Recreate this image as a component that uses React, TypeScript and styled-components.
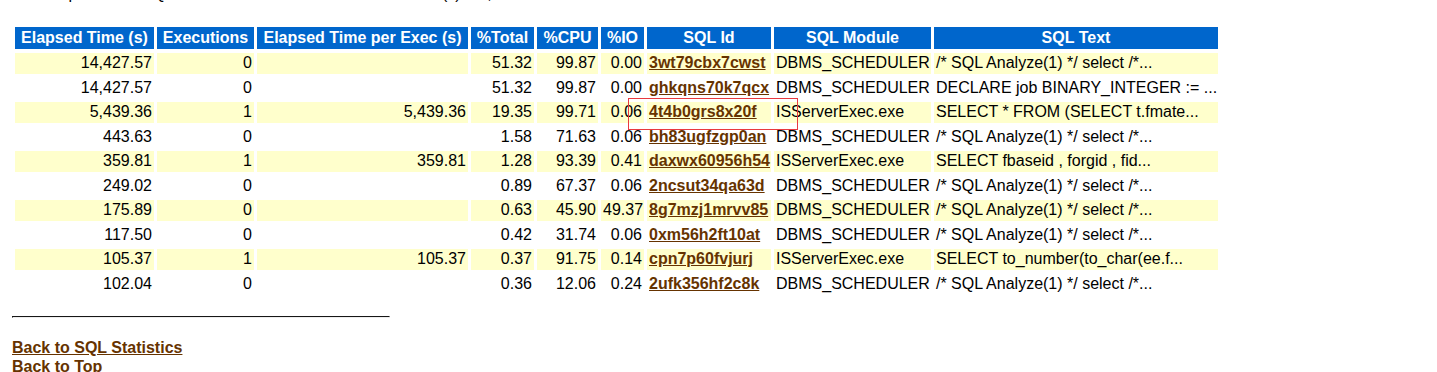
import React from 'react';
import styled, { createGlobalStyle } from 'styled-components';

type SqlRow = {
  elapsed: string;
  execs: string;
  perExec: string;
  total: string;
  cpu: string;
  io: string;
  sqlId: string;
  module: string;
  text: string;
};

const rows: SqlRow[] = [
  { elapsed: '14,427.57', execs: '0', perExec: '', total: '51.32', cpu: '99.87', io: '0.00', sqlId: '3wt79cbx7cwst', module: 'DBMS_SCHEDULER', text: '/* SQL Analyze(1) */ select /*...' },
  { elapsed: '14,427.57', execs: '0', perExec: '', total: '51.32', cpu: '99.87', io: '0.00', sqlId: 'ghkqns70k7qcx', module: 'DBMS_SCHEDULER', text: 'DECLARE job BINARY_INTEGER := ...' },
  { elapsed: '5,439.36', execs: '1', perExec: '5,439.36', total: '19.35', cpu: '99.71', io: '0.06', sqlId: '4t4b0grs8x20f', module: 'ISServerExec.exe', text: 'SELECT * FROM (SELECT t.fmate...' },
  { elapsed: '443.63', execs: '0', perExec: '', total: '1.58', cpu: '71.63', io: '0.06', sqlId: 'bh83ugfzgp0an', module: 'DBMS_SCHEDULER', text: '/* SQL Analyze(1) */ select /*...' },
  { elapsed: '359.81', execs: '1', perExec: '359.81', total: '1.28', cpu: '93.39', io: '0.41', sqlId: 'daxwx60956h54', module: 'ISServerExec.exe', text: 'SELECT fbaseid , forgid , fid...' },
  { elapsed: '249.02', execs: '0', perExec: '', total: '0.89', cpu: '67.37', io: '0.06', sqlId: '2ncsut34qa63d', module: 'DBMS_SCHEDULER', text: '/* SQL Analyze(1) */ select /*...' },
  { elapsed: '175.89', execs: '0', perExec: '', total: '0.63', cpu: '45.90', io: '49.37', sqlId: '8g7mzj1mrvv85', module: 'DBMS_SCHEDULER', text: '/* SQL Analyze(1) */ select /*...' },
  { elapsed: '117.50', execs: '0', perExec: '', total: '0.42', cpu: '31.74', io: '0.06', sqlId: '0xm56h2ft10at', module: 'DBMS_SCHEDULER', text: '/* SQL Analyze(1) */ select /*...' },
  { elapsed: '105.37', execs: '1', perExec: '105.37', total: '0.37', cpu: '91.75', io: '0.14', sqlId: 'cpn7p60fvjurj', module: 'ISServerExec.exe', text: 'SELECT to_number(to_char(ee.f...' },
  { elapsed: '102.04', execs: '0', perExec: '', total: '0.36', cpu: '12.06', io: '0.24', sqlId: '2ufk356hf2c8k', module: 'DBMS_SCHEDULER', text: '/* SQL Analyze(1) */ select /*...' },
];

const columns = [
  { title: 'Elapsed Time (s)', width: 139 },
  { title: 'Executions', width: 97 },
  { title: 'Elapsed Time per Exec (s)', width: 211 },
  { title: '%Total', width: 63 },
  { title: '%CPU', width: 61 },
  { title: '%IO', width: 43 },
  { title: 'SQL Id', width: 124 },
  { title: 'SQL Module', width: 157 },
  { title: 'SQL Text', width: 284 },
];

const GlobalStyle = createGlobalStyle`
  html, body {
    margin: 0;
    background: #ffffff;
    overflow: hidden;
  }
  body {
    font-family: 'Liberation Sans', Arial, sans-serif;
    font-size: 16px;
    color: #000000;
  }
`;

// flow-root keeps the note list's negative margin inside the page box
const Page = styled.div`
  position: relative;
  display: flow-root;
  padding: 0 12px;
`;

const NoteList = styled.ul`
  margin: -15px 0 20px;
  padding-left: 36px;
  line-height: 18px;
`;

const Report = styled.table`
  table-layout: fixed;
  width: 1209px;
  border-collapse: separate;
  border-spacing: 3px 4px;
`;

const HeadCell = styled.th`
  height: 22px;
  padding: 0 2px;
  background: #0066cc;
  color: #ffffff;
  font-weight: bold;
  text-align: center;
  white-space: nowrap;
  vertical-align: middle;
`;

const Row = styled.tr<{ $odd: boolean }>`
  background: ${({ $odd }) => ($odd ? '#ffffcc' : '#ffffff')};
`;

const Cell = styled.td<{ $align?: 'left' | 'right' }>`
  height: 20.5px;
  padding: 0 2px;
  text-align: ${({ $align }) => $align ?? 'right'};
  white-space: nowrap;
  overflow: hidden;
  vertical-align: middle;
`;

const SqlLink = styled.a`
  color: #663300;
  font-weight: bold;
  text-decoration: underline;
`;

const Rule = styled.hr`
  width: 376px;
  margin: 18px 0 0;
  border: 1px inset #eeeeee;
  border-top-color: #6b6b6b;
  border-left-color: #6b6b6b;
`;

const BackLinks = styled.div`
  margin-top: 20px;
  line-height: 19px;
`;

const BackLink = styled.a`
  display: block;
  color: #663300;
  font-weight: bold;
  text-decoration: underline;
`;

const Highlight = styled.div`
  position: absolute;
  left: 628px;
  top: 98px;
  width: 170px;
  height: 32px;
  box-sizing: border-box;
  border: 1px solid #e8393f;
  pointer-events: none;
`;

export default function App() {
  return (
    <>
      <GlobalStyle />
      <Page>
        <NoteList>
          <li>Captured PL/SQL account for 137.3% of Total DB Time (s): 28,112</li>
        </NoteList>
        <Report>
          <colgroup>
            {columns.map(c => (
              <col key={c.title} style={{ width: c.width }} />
            ))}
          </colgroup>
          <thead>
            <tr>
              {columns.map(c => (
                <HeadCell key={c.title}>{c.title}</HeadCell>
              ))}
            </tr>
          </thead>
          <tbody>
            {rows.map((r, i) => (
              <Row key={r.sqlId} $odd={i % 2 === 0}>
                <Cell>{r.elapsed}</Cell>
                <Cell>{r.execs}</Cell>
                <Cell>{r.perExec}</Cell>
                <Cell>{r.total}</Cell>
                <Cell>{r.cpu}</Cell>
                <Cell>{r.io}</Cell>
                <Cell $align="left">
                  <SqlLink href="#">{r.sqlId}</SqlLink>
                </Cell>
                <Cell $align="left">{r.module}</Cell>
                <Cell $align="left">{r.text}</Cell>
              </Row>
            ))}
          </tbody>
        </Report>
        <Rule />
        <BackLinks>
          <BackLink href="#">Back to SQL Statistics</BackLink>
          <BackLink href="#">Back to Top</BackLink>
        </BackLinks>
        <Highlight />
      </Page>
    </>
  );
}
